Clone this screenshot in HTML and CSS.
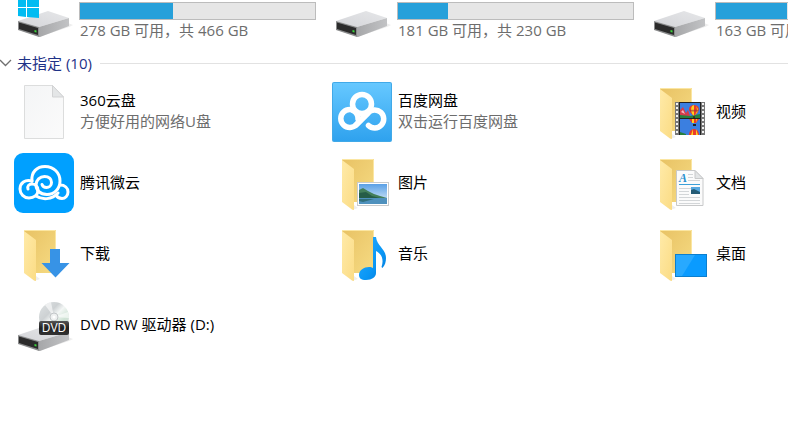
FILE: index.html
```html
<!DOCTYPE html>
<html lang="zh-CN">
<head>
<meta charset="utf-8">
<title>此电脑</title>
<link rel="stylesheet" href="styles.css">
</head>
<body>
<svg class="defs" aria-hidden="true">
  <defs>
    <linearGradient id="top" x1="0" y1="1" x2="1" y2="0"><stop offset="0" stop-color="#d4d5d9"/><stop offset="1" stop-color="#e6e7e9"/></linearGradient>
    <linearGradient id="side" x1="0" y1="0" x2="1" y2="0"><stop offset="0" stop-color="#a6a7a9"/><stop offset="1" stop-color="#c2c3c5"/></linearGradient>
    <linearGradient id="back" x1="0" y1="0" x2="1" y2="1"><stop offset="0" stop-color="#e8c264"/><stop offset="1" stop-color="#f6db83"/></linearGradient>
    <linearGradient id="flap" x1="0" y1="0" x2="1" y2="1"><stop offset="0" stop-color="#ffeaa8"/><stop offset="1" stop-color="#fbdc85"/></linearGradient>
    <linearGradient id="paper" x1="0" y1="0" x2="1" y2="1"><stop offset="0" stop-color="#f4f5f6"/><stop offset="1" stop-color="#fbfbfb"/></linearGradient>
    <linearGradient id="baidu" x1="0" y1="0" x2="0" y2="1"><stop offset="0" stop-color="#66c8ff"/><stop offset="1" stop-color="#2fa2ee"/></linearGradient>
    <linearGradient id="sky" x1="0" y1="0" x2="0" y2="1"><stop offset="0" stop-color="#5aa0e6"/><stop offset="1" stop-color="#e3f1fa"/></linearGradient>
    <linearGradient id="note" x1="0" y1="0" x2="1" y2="1"><stop offset="0" stop-color="#29aaff"/><stop offset=".6" stop-color="#0a97f5"/><stop offset="1" stop-color="#0078d8"/></linearGradient>
    <linearGradient id="disc" x1="0" y1="0" x2="1" y2="1"><stop offset="0" stop-color="#dfe3e4"/><stop offset=".35" stop-color="#cdd1d3"/><stop offset=".5" stop-color="#f3f6f5"/><stop offset=".7" stop-color="#cfe3d5"/><stop offset="1" stop-color="#d9d9dc"/></linearGradient>
    <linearGradient id="badge" x1="0" y1="0" x2="0" y2="1"><stop offset="0" stop-color="#555"/><stop offset=".5" stop-color="#222"/><stop offset="1" stop-color="#333"/></linearGradient>
    <symbol id="drive" viewBox="0 0 60 42">
      <path d="M25 37 55 27 59 25 54 23Z" fill="#eee"/>
      <path d="M4 21 34 11 55 18 25 27Z" fill="url(#top)"/>
      <path d="M25 27 55 18V26L26 37H25Z" fill="url(#side)"/>
      <path d="M4 21 25 27V37L4 30Z" fill="#8a8b8c"/>
      <path d="M5 22.500 24 28V35L5 29Z" fill="#2b2b2b"/>
      <path d="M20.500 30 22.500 30.500V32.500L20.500 32Z" fill="#3bd63b"/>
    </symbol>
    <symbol id="folder" viewBox="0 0 60 60">
      <path d="M20 57 26 55 22 52Z" fill="#eee"/>
      <path d="M10 6H42V49H22L10 49Z" fill="url(#back)"/>
      <path d="M10 6.500H41.500V48" fill="none" stroke="#fbe6a2"/>
      <path d="M10 7 22 16V57L20 56.500 10 49Z" fill="url(#flap)"/>
    </symbol>
    <symbol id="balloon" viewBox="0 0 12 15">
      <path d="M6 0C10 0 12 3 11 6 10 9 8 10 7 11H5C4 10 2 9 1 6 0 3 2 0 6 0Z" fill="#e83c2d"/>
      <path d="M4 1C2 4 3 8 5 11L6 11V0ZM8 1C10 4 9 8 7 11L8 10C11 7 11 4 8 1Z" fill="#ffd21c"/>
      <path d="M1 5H11L10 7H2Z" fill="#8c2d42" opacity=".6"/>
      <path d="M5 12H7V14H5Z" fill="#3d2d18"/>
    </symbol>
  </defs>
</svg>

<main class="explorer">
  <ul class="grid drives">
    <li class="item">
      <svg class="icon" viewBox="0 0 60 42" aria-hidden="true">
        <use href="#drive" width="60" height="42"/>
        <path d="M4 0H12V7H4ZM13 0H25V7H13ZM4 8H12V17L4 16ZM13 8H25V18L13 17Z" fill="#00bcf2"/>
      </svg>
      <div class="usage"><progress aria-label="已用空间" value="188" max="475"></progress><span class="detail">278 GB 可用，共 466 GB</span></div>
    </li>
    <li class="item">
      <svg class="icon" viewBox="0 0 60 42" aria-hidden="true"><use href="#drive" width="60" height="42"/></svg>
      <div class="usage"><progress aria-label="已用空间" value="49" max="230"></progress><span class="detail">181 GB 可用，共 230 GB</span></div>
    </li>
    <li class="item">
      <svg class="icon" viewBox="0 0 60 42" aria-hidden="true"><use href="#drive" width="60" height="42"/></svg>
      <div class="usage"><progress aria-label="已用空间" value="30" max="100"></progress><span class="detail">163 GB 可用</span></div>
    </li>
  </ul>

  <h2 class="group">
    <svg class="chevron" viewBox="0 0 12 8" aria-hidden="true"><path d="M0 1 5.500 6.500 11 1" fill="none" stroke="#707070" stroke-width="1.300"/></svg>
    未指定 (10)
  </h2>

  <ul class="grid files">
    <li class="item">
      <svg class="icon" viewBox="0 0 60 60" aria-hidden="true">
        <path d="M10.500 3.500H38.500L49.500 15V56.500H10.500Z" fill="url(#paper)" stroke="#dcdddd"/>
        <path d="M38.500 3.500V15H49.500Z" fill="#e4e6e7" stroke="#d2d3d4"/>
      </svg>
      <div class="label"><span>360云盘</span><span class="detail">方便好用的网络U盘</span></div>
    </li>
    <li class="item">
      <svg class="icon" viewBox="0 0 60 60" aria-hidden="true">
        <rect width="60" height="60" rx="2" fill="#41a9e8"/>
        <rect x="1" y="1" width="58" height="58" rx="1" fill="url(#baidu)"/>
        <g fill="none" stroke="#fff" stroke-width="5.500" stroke-linecap="round">
          <circle cx="30" cy="22" r="9.500"/>
          <path d="M36 31 24.500 42.500A9 9 0 1 1 24.500 30.500"/>
          <path d="M24 43 36 31A9 9 0 1 1 36.500 43.500"/>
          <path d="M21 28.500A9 9 0 0 1 26 37"/>
        </g>
      </svg>
      <div class="label"><span>百度网盘</span><span class="detail">双击运行百度网盘</span></div>
    </li>
    <li class="item">
      <svg class="icon" viewBox="0 0 60 60" aria-hidden="true">
        <use href="#folder" width="60" height="60"/>
        <rect x="25" y="20" width="30" height="33" fill="#777"/>
        <path d="M27 21V53M53 21V53" stroke="#f2f2f2" stroke-width="2" stroke-dasharray="2 2"/>
        <path d="M29 20H51V53H29Z" fill="#222"/>
        <rect x="30" y="21" width="20" height="15" fill="#3b7fe0"/>
        <rect x="30" y="37" width="20" height="16" fill="#3b7fe0"/>
        <path d="M30 28 33 25 36 31 38 28 40 34H30Z" fill="#d43c4b"/>
        <path d="M31 30 33 28 35 32Z" fill="#f8b8c0"/>
        <path d="M30 33 40 34 50 32V36H30Z" fill="#27803d"/>
        <use href="#balloon" x="38" y="23" width="12" height="14"/>
        <path d="M39 37H49L46 41H42Z" fill="#e83c2d"/><path d="M42 37H44V41H42ZM46 37H47L46 41Z" fill="#ffd21c"/>
        <path d="M43 42H46V44H43Z" fill="#222"/>
        <path d="M39 53C39 45 49 45 49 53Z" fill="#e83c2d"/><path d="M41 53 43 47V53ZM46 53V47L48 53Z" fill="#ffd21c"/>
        <path d="M30 50 36 52V53H30Z" fill="#27803d"/>
      </svg>
      <div class="label"><span>视频</span></div>
    </li>
    <li class="item">
      <svg class="icon" viewBox="0 0 60 60" aria-hidden="true">
        <rect width="60" height="60" rx="9" fill="#00a0ff"/>
        <g fill="none" stroke="#fff" stroke-width="3" stroke-linecap="round">
          <path d="M18 28C17 19 23 13.500 31 13.500 40 13.500 46 20 46 28 46 36 40 41.500 33 41.500 26 41.500 22 37 22 32 22 27 26 23.500 30.500 23.500 35 23.500 37.500 26 37.500 29.500 37.500 32.500 35 34.500 32.500 34.500 30 34.500 28.500 33 28 31.500"/>
          <path d="M18 28C11 26 6 30 6 36 6 41 10 45 15 45 20 45 24 42 24 37 24 33 21 31 18 31 15 31 13 33 14 36"/>
          <path d="M22 43C28 47 38 47 44 40"/>
          <path d="M46 32C51 32 54 35 54 39 54 43 51 45.500 48 45.500 45 45.500 43 44 42 42"/>
        </g>
      </svg>
      <div class="label"><span>腾讯微云</span></div>
    </li>
    <li class="item">
      <svg class="icon" viewBox="0 0 60 60" aria-hidden="true">
        <use href="#folder" width="60" height="60"/>
        <rect x="25.500" y="29.500" width="31" height="23" fill="#fff" stroke="#c9cbcc"/>
        <rect x="27" y="31" width="28" height="20" fill="url(#sky)"/>
        <path d="M27 37 31 35 36 38 42 41 48 43 55 45V46H27Z" fill="#437f5a"/>
        <path d="M27 40 34 39 40 43 48 45 55 46H27Z" fill="#265d47"/>
        <path d="M27 45H55V51H27Z" fill="#4f91bd"/><path d="M27 46 42 46 31 49 27 48Z" fill="#316f7b"/>
      </svg>
      <div class="label"><span>图片</span></div>
    </li>
    <li class="item">
      <svg class="icon" viewBox="0 0 60 60" aria-hidden="true">
        <use href="#folder" width="60" height="60"/>
        <path d="M26.500 17.500H45L53 25.500V52.500H26.500Z" fill="#fbfbfb" stroke="#c8c9ca"/>
        <path d="M45 17.500V25.500H53Z" fill="#e3e5e6" stroke="#c8c9ca"/>
        <path d="M38 21.500H43M38 24.500H43M38 27.500H50M29 35.500H50M29 38.500H39M29 41.500H39M29 44.500H50M29 47.500H50M29 50.500H50" stroke="#d3d6d8"/>
        <path d="M29 31.500H50" stroke="#3ba0d8"/>
        <text class="letter" x="29" y="29">A</text>
        <rect x="41" y="34" width="9" height="7" fill="#56a8df"/><path d="M41 37 44 36 50 39V41H41Z" fill="#245b75"/>
      </svg>
      <div class="label"><span>文档</span></div>
    </li>
    <li class="item">
      <svg class="icon" viewBox="0 0 60 60" aria-hidden="true">
        <use href="#folder" width="60" height="60"/>
        <path d="M36 25H46V39H55.500L41.500 53.500 27.500 39H36Z" fill="#3793e6"/>
      </svg>
      <div class="label"><span>下载</span></div>
    </li>
    <li class="item">
      <svg class="icon" viewBox="0 0 60 60" aria-hidden="true">
        <use href="#folder" width="60" height="60"/>
        <path d="M41 13H44C45 22 54 25 54 34 54 38 53 41 50.500 44L49.500 43C52 36 50 30 44 27V49C44 53 40 56 34 56 29 56 27 54 27 51 27 46 32 43 37 43 39 43 40 43.500 41 44Z" fill="url(#note)"/>
      </svg>
      <div class="label"><span>音乐</span></div>
    </li>
    <li class="item">
      <svg class="icon" viewBox="0 0 60 60" aria-hidden="true">
        <use href="#folder" width="60" height="60"/>
        <rect x="25.500" y="30.500" width="31" height="22" fill="#0a9bff" stroke="#0c7fce"/>
        <path d="M26 31H45L32 52H26Z" fill="#28a9ff"/>
      </svg>
      <div class="label"><span>桌面</span></div>
    </li>
    <li class="item">
      <svg class="icon" viewBox="0 0 60 60" aria-hidden="true">
        <use href="#drive" y="19" width="60" height="42"/>
        <circle cx="40" cy="22" r="15" fill="url(#disc)"/>
        <path d="M40 22 31 10A15 15 0 0 1 37 7ZM40 22 54 17A15 15 0 0 1 55 23Z" fill="#fff" opacity=".6"/>
        <circle cx="40" cy="22" r="4" fill="#eef0f0" stroke="#c2c6c8"/><circle cx="40" cy="22" r="1.500" fill="#fff"/>
        <rect x="25" y="26" width="30" height="14" rx="2" fill="url(#badge)"/>
        <text class="dvd" x="40" y="37">DVD</text>
      </svg>
      <div class="label"><span>DVD RW 驱动器 (D:)</span></div>
    </li>
  </ul>
</main>
</body>
</html>
```
FILE: styles.css
```css
body {
  margin: 0;
  overflow: hidden;
  background: #fff;
  color: #000;
  font: 15px/21px "Open Sans", "Noto Sans CJK SC", sans-serif;
}

.defs {
  position: absolute;
  width: 0;
  height: 0;
}

.explorer {
  overflow: hidden;
}

.grid {
  display: grid;
  grid-template-columns: repeat(3, 318px);
  margin: 0;
  padding: 0 0 0 14px;
  list-style: none;
}

.files {
  grid-auto-rows: 60px;
  row-gap: 11px;
  padding-top: 8px;
}

.item {
  display: flex;
  align-items: center;
  gap: 6px;
  white-space: nowrap;
}

.drives .item {
  align-items: flex-start;
  gap: 5px;
}

.icon {
  flex: none;
  width: 60px;
}

.label,
.usage {
  display: flex;
  flex-direction: column;
}

.label {
  padding-bottom: 2px;
}

.usage {
  padding-top: 2px;
}

.usage .detail {
  padding-left: 1px;
}

.detail {
  color: #6d6d6d;
}

progress {
  appearance: none;
  box-sizing: border-box;
  width: 237px;
  height: 18px;
  border: 1px solid #bcbcbc;
  background: #e6e6e6;
}

progress::-webkit-progress-bar {
  background: #e6e6e6;
}

progress::-webkit-progress-value {
  background: #26a0da;
}

.group {
  display: flex;
  align-items: center;
  gap: 5px;
  margin: 10px 0 0;
  color: #1e3287;
  font-size: 15px;
  font-weight: 400;
  line-height: 22px;
}

.group::after {
  content: "";
  flex: 1;
  height: 1px;
  margin-left: 3px;
  background: #e2e2e2;
}

.chevron {
  width: 12px;
  height: 8px;
}

.letter {
  fill: #2790cf;
  font: italic bold 12px "Liberation Serif", serif;
}

.dvd {
  fill: #fff;
  font: 12px "Open Sans", sans-serif;
  text-anchor: middle;
}
```
